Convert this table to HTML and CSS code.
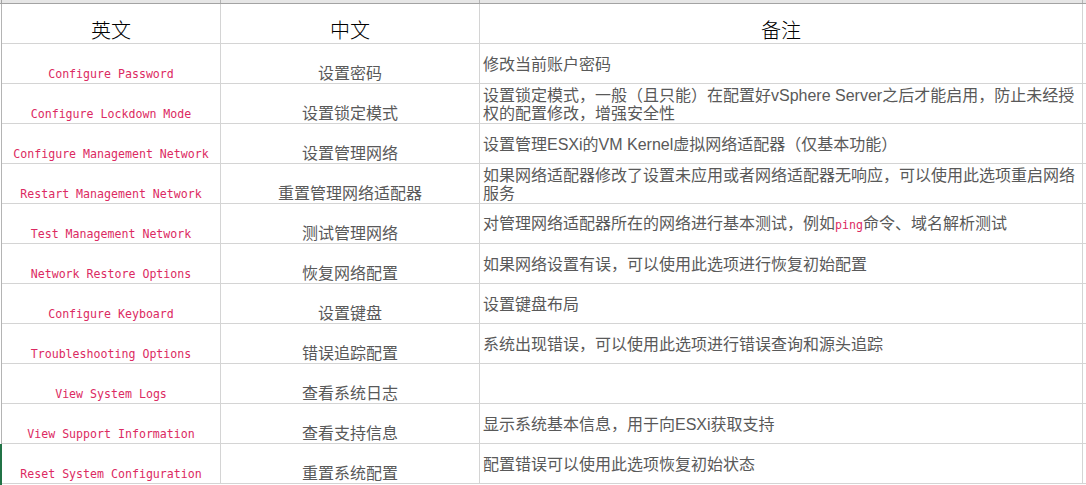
FILE: index.html
```html
<!DOCTYPE html>
<html lang="zh-CN">
<head>
<meta charset="utf-8">
<title>ESXi 配置选项</title>
<link rel="stylesheet" href="styles.css">
</head>
<body>
<div class="strip">
  <div class="tick g"></div><div class="tick"></div><div class="tick"></div><div class="tick"></div><div class="tick end"></div>
</div>
<div class="sheet">
  <div class="gut"></div>
  <div class="c head">英文</div>
  <div class="c head">中文</div>
  <div class="c head">备注</div>
  <div class="c pad"></div>

  <div class="gut"></div>
  <div class="c en">Configure Password</div>
  <div class="c zh">设置密码</div>
  <div class="c note">修改当前账户密码</div>
  <div class="c pad"></div>

  <div class="gut"></div>
  <div class="c en">Configure Lockdown Mode</div>
  <div class="c zh">设置锁定模式</div>
  <div class="c note"><span>设置锁定模式，一般（且只能）在配置好vSphere Server之后才能启用，防止未经授<br>权的配置修改，增强安全性</span></div>
  <div class="c pad"></div>

  <div class="gut"></div>
  <div class="c en">Configure Management Network</div>
  <div class="c zh">设置管理网络</div>
  <div class="c note">设置管理ESXi的VM Kernel虚拟网络适配器（仅基本功能）</div>
  <div class="c pad"></div>

  <div class="gut"></div>
  <div class="c en">Restart Management Network</div>
  <div class="c zh">重置管理网络适配器</div>
  <div class="c note"><span>如果网络适配器修改了设置未应用或者网络适配器无响应，可以使用此选项重启网络<br>服务</span></div>
  <div class="c pad"></div>

  <div class="gut"></div>
  <div class="c en">Test Management Network</div>
  <div class="c zh">测试管理网络</div>
  <div class="c note"><span>对管理网络适配器所在的网络进行基本测试，例如<code class="code">ping</code>命令、域名解析测试</span></div>
  <div class="c pad"></div>

  <div class="gut"></div>
  <div class="c en">Network Restore Options</div>
  <div class="c zh">恢复网络配置</div>
  <div class="c note">如果网络设置有误，可以使用此选项进行恢复初始配置</div>
  <div class="c pad"></div>

  <div class="gut"></div>
  <div class="c en">Configure Keyboard</div>
  <div class="c zh">设置键盘</div>
  <div class="c note">设置键盘布局</div>
  <div class="c pad"></div>

  <div class="gut"></div>
  <div class="c en">Troubleshooting Options</div>
  <div class="c zh">错误追踪配置</div>
  <div class="c note">系统出现错误，可以使用此选项进行错误查询和源头追踪</div>
  <div class="c pad"></div>

  <div class="gut"></div>
  <div class="c en">View System Logs</div>
  <div class="c zh">查看系统日志</div>
  <div class="c note"></div>
  <div class="c pad"></div>

  <div class="gut"></div>
  <div class="c en">View Support Information</div>
  <div class="c zh">查看支持信息</div>
  <div class="c note">显示系统基本信息，用于向ESXi获取支持</div>
  <div class="c pad"></div>

  <div class="gut sel"></div>
  <div class="c en">Reset System Configuration</div>
  <div class="c zh">重置系统配置</div>
  <div class="c note">配置错误可以使用此选项恢复初始状态</div>
  <div class="c pad"></div>
</div>
</body>
</html>
```
FILE: styles.css
```css
html, body {
  margin: 0;
  padding: 0;
  background: #ffffff;
}
body {
  width: 1086px;
  height: 485px;
  overflow: hidden;
  font-family: "Liberation Sans", "Noto Sans CJK SC", sans-serif;
}
.strip {
  display: grid;
  grid-template-columns: 2px 219px 259px 603px 3px;
  height: 4px;
  box-sizing: border-box;
  background: #e6e6e6;
  border-bottom: 1px solid #a3a3a3;
}
.tick {
  box-sizing: border-box;
  border-right: 1px solid #b4b4b4;
}
.tick.g {
  border-right: none;
  border-left: 1px solid #e6e6e6;
  background: #a3a3a3;
  width: 2px;
}
.tick.end { border-right: none; }
.sheet {
  display: grid;
  grid-template-columns: 2px 219px 259px 603px 3px;
  grid-auto-rows: 40px;
}
.gut {
  box-sizing: border-box;
  border-left: 1px solid #ffffff;
  background: #b4b4b4;
  width: 2px;
}
.gut.sel {
  border-left: none;
  background: #217346;
  height: 42px;
}
.c {
  box-sizing: border-box;
  border-right: 1px solid #d4d4d4;
  border-bottom: 1px solid #d4d4d4;
  display: flex;
  min-width: 0;
  overflow: hidden;
}
.pad { border-right: none; }
.head {
  justify-content: center;
  align-items: flex-end;
  font-family: "Noto Sans CJK SC", sans-serif;
  font-size: 20px;
  font-weight: 300;
  line-height: 26px;
  color: #000000;
  padding-bottom: 0;
}
.en {
  justify-content: center;
  align-items: flex-end;
  font-family: "DejaVu Sans Mono", monospace;
  font-size: 11.6px;
  line-height: 14px;
  color: #dc2a62;
  padding-bottom: 2px;
}
.zh {
  justify-content: center;
  align-items: flex-end;
  font-family: "Noto Sans CJK SC", sans-serif;
  font-size: 16px;
  line-height: 20px;
  color: #595959;
  padding-bottom: 1px;
}
.note {
  align-items: center;
  padding: 3px 0 0 3px;
  font-family: "Liberation Sans", "Noto Sans CJK SC", sans-serif;
  font-size: 16px;
  line-height: 18.5px;
  color: #595959;
  white-space: nowrap;
}
.code {
  font-family: "DejaVu Sans Mono", monospace;
  font-size: 11.6px;
  color: #dc2a62;
}
```
